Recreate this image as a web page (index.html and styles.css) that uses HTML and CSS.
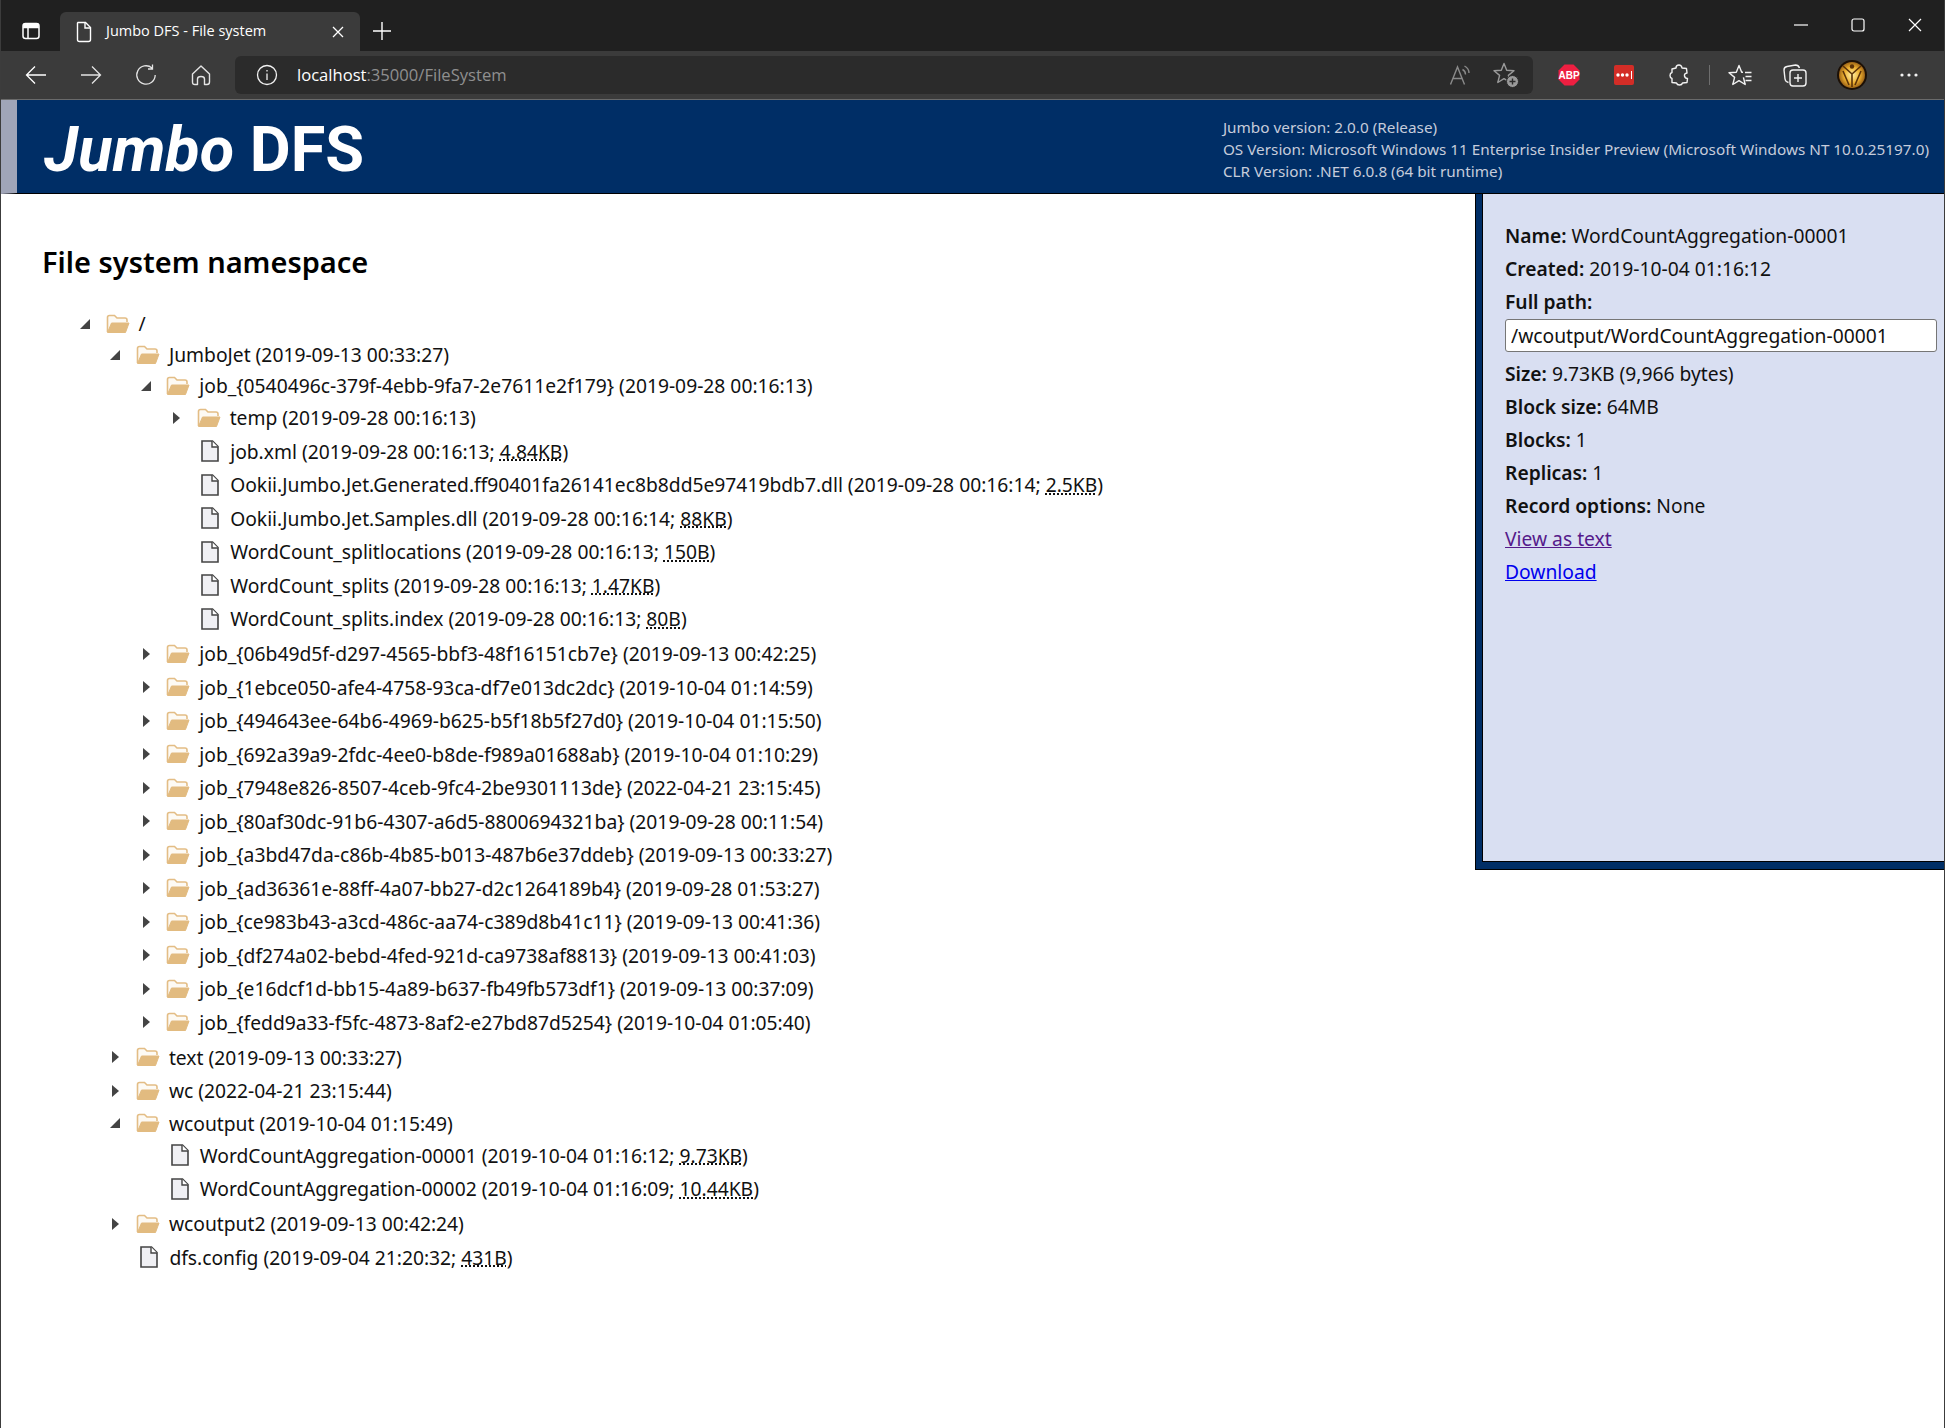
FILE: index.html
```html
<!DOCTYPE html>
<html lang="en">

<head>
  <meta charset="UTF-8">
  <title>Jumbo DFS - File system</title>
  <link rel="stylesheet" href="styles.css">
</head>

<body>

  <!-- Icons used by the tree and the browser frame -->
  <svg class="sprites" width="0" height="0">
    <defs>
      <radialGradient id="gold" cx="50%" cy="50%" r="55%">
        <stop offset="0" stop-color="#fff0a8"/>
        <stop offset="0.55" stop-color="#eeb030"/>
        <stop offset="1" stop-color="#8a5210"/>
      </radialGradient>
    </defs>
    <symbol id="folder" viewBox="0 0 24 20">
      <path d="M1.5 18V3.5Q1.5 1.5 3.5 1.5H8.5L11 4H19Q21 4 21 6V8" fill="#fdfaf4" stroke="#e3bd85" stroke-width="1.6"/>
      <path d="M1.5 18.5L5.5 9H23L19.5 18.5Z" fill="#e2bb80" stroke="#e2bb80" stroke-width="1"/>
    </symbol>
    <symbol id="file" viewBox="0 0 18 22">
      <path d="M1 1H11.5L17 6.5V21H1Z" fill="#f0f0f4" stroke="#444" stroke-width="1.6"/>
      <path d="M11 1V7H17" fill="#fff" stroke="#444" stroke-width="1.4"/>
    </symbol>
  </svg>

  <div class="window">
    <div class="tabstrip">
      <svg class="sidebar-btn" width="20" height="20" viewBox="0 0 20 20" fill="none" stroke="#fff" stroke-width="1.5">
        <rect x="2" y="2.5" width="16" height="15" rx="2.5"/>
        <path d="M2 6.5H18M7 6.5V17.5"/>
        <path d="M3 3.5H17V6H3Z" fill="#fff"/>
      </svg>
      <div class="tab">
        <svg width="18" height="22" viewBox="0 0 18 22" fill="none" stroke="#fff" stroke-width="1.4">
          <path d="M3 1.5H10.5L15.5 6.5V18.5Q15.5 20.5 13.5 20.5H4.5Q2.5 20.5 2.5 18.5V2Z"/>
          <path d="M10 1.5V7H15.5"/>
        </svg>
        <span class="tab-title">Jumbo DFS - File system</span>
        <svg width="14" height="14" viewBox="0 0 14 14" stroke="#fff" stroke-width="1.3"><path d="M2 2L12 12M12 2L2 12"/></svg>
      </div>
      <svg class="new-tab" width="20" height="20" viewBox="0 0 20 20" stroke="#fff" stroke-width="1.4"><path d="M10 1V19M1 10H19"/></svg>
      <div class="window-btns">
        <svg width="14" height="14" viewBox="0 0 14 14" stroke="#fff" stroke-width="1.2"><path d="M0 7H14"/></svg>
        <svg width="14" height="14" viewBox="0 0 14 14" fill="none" stroke="#fff" stroke-width="1.2"><rect x="1" y="1" width="12" height="12" rx="2"/></svg>
        <svg width="14" height="14" viewBox="0 0 14 14" stroke="#fff" stroke-width="1.2"><path d="M1 1L13 13M13 1L1 13"/></svg>
      </div>
    </div>

    <div class="toolbar">
      <span class="tool">
        <svg width="22" height="22" viewBox="0 0 22 22" fill="none" stroke="#fff" stroke-width="1.3"><path d="M21 11H1.500M10 2.500L1.500 11L10 19.500"/></svg>
      </span>
      <span class="tool">
        <svg width="22" height="22" viewBox="0 0 22 22" fill="none" stroke="#e4e4e4" stroke-width="1.3"><path d="M1 11H20.500M12 2.500L20.500 11L12 19.500"/></svg>
      </span>
      <span class="tool">
        <svg width="22" height="22" viewBox="0 0 22 22" fill="none" stroke="#e4e4e4" stroke-width="1.3"><path d="M17 4A9.200 9.200 0 1 0 20.200 11M17.500 0.500V5H13"/></svg>
      </span>
      <span class="tool">
        <svg width="22" height="22" viewBox="0 0 22 22" fill="none" stroke="#e4e4e4" stroke-width="1.4" stroke-linejoin="round"><path d="M2.500 10L11 2L19.500 10V18Q19.500 20.500 17 20.500H14.500V15Q14.500 12.500 11 12.500Q7.500 12.500 7.500 15V20.500H5Q2.500 20.500 2.500 18Z"/></svg>
      </span>

      <div class="address">
        <svg width="22" height="22" viewBox="0 0 22 22" fill="none" stroke="#f2f2f2" stroke-width="1.3">
          <circle cx="11" cy="11" r="9.500"/><path d="M11 9.500V16M11 6V7.500"/>
        </svg>
        <span class="url"><span class="host">localhost</span>:35000/FileSystem</span>
        <svg class="read-aloud" width="24" height="22" viewBox="0 0 24 22" fill="none" stroke="#8a8a8a" stroke-width="1.4">
          <path d="M1.500 20.500L8.500 3L15.500 20.500M4 14.500H13M13.500 5.500Q16.500 7 16.500 10.500M15.500 2Q20 4.500 20 9"/>
        </svg>
        <svg class="add-fav" width="26" height="26" viewBox="0 0 26 26" fill="none" stroke="#9a9a9a" stroke-width="1.4" stroke-linejoin="round">
          <path d="M11 1.500L13.700 8.300L21 8.800L15.400 13.400L17.200 20.500L11 16.600L4.800 20.500L6.600 13.400L1 8.800L8.300 8.300Z"/>
          <circle cx="19.500" cy="19.500" r="6" fill="#9a9a9a" stroke="#2b2b2b" stroke-width="1"/>
          <path d="M19.500 16.500V22.500M16.500 19.500H22.500" stroke="#2b2b2b"/>
        </svg>
      </div>

      <span class="tool">
        <svg width="22" height="22" viewBox="0 0 22 22"><path d="M6.500 0.500H15.500L21.500 6.500V15.500L15.500 21.500H6.500L0.500 15.500V6.500Z" fill="#ee1f41"/></svg>
        <span class="abp">ABP</span>
      </span>
      <span class="tool">
        <svg width="20" height="20" viewBox="0 0 20 20">
          <rect width="20" height="20" rx="2" fill="#d32d27"/>
          <circle cx="4" cy="10" r="1.700" fill="#fff"/><circle cx="8.500" cy="10" r="1.700" fill="#fff"/><circle cx="13" cy="10" r="1.700" fill="#fff"/>
          <path d="M17.500 6V14" stroke="#fff"/>
        </svg>
      </span>
      <span class="tool">
        <svg width="20" height="22" viewBox="0 0 20 22" fill="none" stroke="#f2f2f2" stroke-width="1.4" stroke-linejoin="round">
          <path d="M7 4Q7 1 10 1Q12.500 1 13 4L17.500 4.500L18 9Q15 9.500 15.500 12Q16 14.500 18.500 14.500L18 18.500L13.500 19Q13 21 10.500 21Q8 21 7.500 19L3 18.500V14.500Q1 14 1 11.500Q1 9 3 8.500V5Z"/>
        </svg>
      </span>
      <span class="sep"></span>
      <span class="tool">
        <svg width="24" height="22" viewBox="0 0 24 22" fill="none" stroke="#f2f2f2" stroke-width="1.4" stroke-linejoin="round">
          <path d="M15.400 13.400L17.200 20.500L11 16.600L4.800 20.500L6.600 13.400L1 8.800L8.300 8.300L11 1.500L13.700 8.300H15"/>
          <path d="M17 8.500H23.500M17.500 12.500H23.500M17.500 16.500H23.500"/>
        </svg>
      </span>
      <span class="tool">
        <svg width="24" height="24" viewBox="0 0 24 24" fill="none" stroke="#f2f2f2" stroke-width="1.4">
          <path d="M5.500 19.500Q2.500 19 2 16L1 7Q1 4 4 3.500L12.500 2Q15.500 2 16.500 5"/>
          <rect x="7" y="7" width="16" height="16" rx="3"/>
          <path d="M15 11V19M11 15H19"/>
        </svg>
      </span>
      <svg class="avatar" width="30" height="30" viewBox="0 0 30 30">
        <circle cx="15" cy="15" r="15" fill="#1c1006"/>
        <circle cx="15" cy="15" r="13" fill="url(#gold)"/>
        <path d="M15 14L6 6M15 14L24 6M15 14V27M6 11L12 25M24 11L18 25" fill="none" stroke="#5b3208" stroke-width="1.600"/>
        <circle cx="15" cy="6.500" r="2.200" fill="#5b3208"/>
      </svg>
      <span class="tool">
        <svg width="20" height="6" viewBox="0 0 20 6" fill="#f2f2f2"><circle cx="3" cy="3" r="1.600"/><circle cx="10" cy="3" r="1.600"/><circle cx="17" cy="3" r="1.600"/></svg>
      </span>
    </div>

    <header class="banner">
      <h1 class="logo"><em>Jumbo</em> DFS</h1>
      <div class="version">
        <div>Jumbo version: 2.0.0 (Release)</div>
        <div>OS Version: Microsoft Windows 11 Enterprise Insider Preview (Microsoft Windows NT 10.0.25197.0)</div>
        <div>CLR Version: .NET 6.0.8 (64 bit runtime)</div>
      </div>
    </header>

    <main class="page">
      <section class="content">
        <h2 class="title">File system namespace</h2>

        <ul class="tree">
          <li>
            <div class="row open"><span class="tri down"></span><svg class="ico-folder"><use href="#folder"/></svg>/</div>
            <ul>
              <li>
                <div class="row open"><span class="tri down"></span><svg class="ico-folder"><use href="#folder"/></svg>JumboJet (2019-09-13 00:33:27)</div>
                <ul>
                  <li>
                    <div class="row open"><span class="tri down"></span><svg class="ico-folder"><use href="#folder"/></svg>job_{0540496c-379f-4ebb-9fa7-2e7611e2f179} (2019-09-28 00:16:13)</div>
                    <ul>
                      <li class="row"><span class="tri right"></span><svg class="ico-folder"><use href="#folder"/></svg>temp (2019-09-28 00:16:13)</li>
                      <li class="row"><span class="tri none"></span><svg class="ico-file"><use href="#file"/></svg>job.xml (2019-09-28 00:16:13;&nbsp;<abbr title="4,956 bytes">4.84KB</abbr>)</li>
                      <li class="row"><span class="tri none"></span><svg class="ico-file"><use href="#file"/></svg>Ookii.Jumbo.Jet.Generated.ff90401fa26141ec8b8dd5e97419bdb7.dll (2019-09-28 00:16:14;&nbsp;<abbr title="2,560 bytes">2.5KB</abbr>)</li>
                      <li class="row"><span class="tri none"></span><svg class="ico-file"><use href="#file"/></svg>Ookii.Jumbo.Jet.Samples.dll (2019-09-28 00:16:14;&nbsp;<abbr title="90,112 bytes">88KB</abbr>)</li>
                      <li class="row"><span class="tri none"></span><svg class="ico-file"><use href="#file"/></svg>WordCount_splitlocations (2019-09-28 00:16:13;&nbsp;<abbr title="150 bytes">150B</abbr>)</li>
                      <li class="row"><span class="tri none"></span><svg class="ico-file"><use href="#file"/></svg>WordCount_splits (2019-09-28 00:16:13;&nbsp;<abbr title="1,505 bytes">1.47KB</abbr>)</li>
                      <li class="row"><span class="tri none"></span><svg class="ico-file"><use href="#file"/></svg>WordCount_splits.index (2019-09-28 00:16:13;&nbsp;<abbr title="80 bytes">80B</abbr>)</li>
                    </ul>
                  </li>
                  <li class="row"><span class="tri right"></span><svg class="ico-folder"><use href="#folder"/></svg>job_{06b49d5f-d297-4565-bbf3-48f16151cb7e} (2019-09-13 00:42:25)</li>
                  <li class="row"><span class="tri right"></span><svg class="ico-folder"><use href="#folder"/></svg>job_{1ebce050-afe4-4758-93ca-df7e013dc2dc} (2019-10-04 01:14:59)</li>
                  <li class="row"><span class="tri right"></span><svg class="ico-folder"><use href="#folder"/></svg>job_{494643ee-64b6-4969-b625-b5f18b5f27d0} (2019-10-04 01:15:50)</li>
                  <li class="row"><span class="tri right"></span><svg class="ico-folder"><use href="#folder"/></svg>job_{692a39a9-2fdc-4ee0-b8de-f989a01688ab} (2019-10-04 01:10:29)</li>
                  <li class="row"><span class="tri right"></span><svg class="ico-folder"><use href="#folder"/></svg>job_{7948e826-8507-4ceb-9fc4-2be9301113de} (2022-04-21 23:15:45)</li>
                  <li class="row"><span class="tri right"></span><svg class="ico-folder"><use href="#folder"/></svg>job_{80af30dc-91b6-4307-a6d5-8800694321ba} (2019-09-28 00:11:54)</li>
                  <li class="row"><span class="tri right"></span><svg class="ico-folder"><use href="#folder"/></svg>job_{a3bd47da-c86b-4b85-b013-487b6e37ddeb} (2019-09-13 00:33:27)</li>
                  <li class="row"><span class="tri right"></span><svg class="ico-folder"><use href="#folder"/></svg>job_{ad36361e-88ff-4a07-bb27-d2c1264189b4} (2019-09-28 01:53:27)</li>
                  <li class="row"><span class="tri right"></span><svg class="ico-folder"><use href="#folder"/></svg>job_{ce983b43-a3cd-486c-aa74-c389d8b41c11} (2019-09-13 00:41:36)</li>
                  <li class="row"><span class="tri right"></span><svg class="ico-folder"><use href="#folder"/></svg>job_{df274a02-bebd-4fed-921d-ca9738af8813} (2019-09-13 00:41:03)</li>
                  <li class="row"><span class="tri right"></span><svg class="ico-folder"><use href="#folder"/></svg>job_{e16dcf1d-bb15-4a89-b637-fb49fb573df1} (2019-09-13 00:37:09)</li>
                  <li class="row"><span class="tri right"></span><svg class="ico-folder"><use href="#folder"/></svg>job_{fedd9a33-f5fc-4873-8af2-e27bd87d5254} (2019-10-04 01:05:40)</li>
                </ul>
              </li>
              <li class="row"><span class="tri right"></span><svg class="ico-folder"><use href="#folder"/></svg>text (2019-09-13 00:33:27)</li>
              <li class="row"><span class="tri right"></span><svg class="ico-folder"><use href="#folder"/></svg>wc (2022-04-21 23:15:44)</li>
              <li>
                <div class="row open"><span class="tri down"></span><svg class="ico-folder"><use href="#folder"/></svg>wcoutput (2019-10-04 01:15:49)</div>
                <ul>
                  <li class="row"><span class="tri none"></span><svg class="ico-file"><use href="#file"/></svg>WordCountAggregation-00001 (2019-10-04 01:16:12;&nbsp;<abbr title="9,966 bytes">9.73KB</abbr>)</li>
                  <li class="row"><span class="tri none"></span><svg class="ico-file"><use href="#file"/></svg>WordCountAggregation-00002 (2019-10-04 01:16:09;&nbsp;<abbr title="10,691 bytes">10.44KB</abbr>)</li>
                </ul>
              </li>
              <li class="row"><span class="tri right"></span><svg class="ico-folder"><use href="#folder"/></svg>wcoutput2 (2019-09-13 00:42:24)</li>
              <li class="row"><span class="tri none"></span><svg class="ico-file"><use href="#file"/></svg>dfs.config (2019-09-04 21:20:32;&nbsp;<abbr title="431 bytes">431B</abbr>)</li>
            </ul>
          </li>
        </ul>
      </section>

      <aside class="details">
        <div class="details-inner">
          <p><b>Name:</b> WordCountAggregation-00001</p>
          <p><b>Created:</b> 2019-10-04 01:16:12</p>
          <p><b>Full path:</b></p>
          <input class="full-path" type="text" value="/wcoutput/WordCountAggregation-00001">
          <p><b>Size:</b> 9.73KB (9,966 bytes)</p>
          <p><b>Block size:</b> 64MB</p>
          <p><b>Blocks:</b> 1</p>
          <p><b>Replicas:</b> 1</p>
          <p><b>Record options:</b> None</p>
          <p><a class="visited" href="#">View as text</a></p>
          <p><a class="link" href="#">Download</a></p>
        </div>
      </aside>
    </main>
  </div>

</body>

</html>
```

FILE: styles.css
```css
html,
body {
  margin: 0;
  height: 100%;
  overflow: hidden;
  background: #fff;
}

body {
  font-family: "Noto Sans", "Open Sans", sans-serif;
  font-size: 19.250px;
  color: #111;
}

.sprites {
  position: absolute;
}

.window {
  height: 100vh;
  display: flex;
  flex-direction: column;
  border-left: 1px solid #3c3c3c;
  border-right: 1px solid #3c3c3c;
}

/* Browser frame */
.tabstrip {
  height: 51px;
  flex: none;
  display: flex;
  align-items: flex-end;
  background: #202020;
  color: #fff;
}

.sidebar-btn {
  margin: 0 0 10px 20px;
}

.tab {
  width: 300px;
  height: 39px;
  margin-left: 19px;
  padding: 0 15px;
  box-sizing: border-box;
  display: flex;
  align-items: center;
  background: #3b3b3b;
  border-radius: 6px 6px 0 0;
  font-family: "Open Sans", sans-serif;
  font-size: 14.500px;
}

.tab-title {
  flex: 1;
  margin: 0 0 2px 13px;
}

.new-tab {
  margin: 0 0 10px 12px;
}

.window-btns {
  margin-left: auto;
  align-self: flex-start;
  display: flex;
  gap: 43px;
  padding: 18px 22px 0 0;
}

.toolbar {
  height: 48px;
  flex: none;
  display: flex;
  align-items: center;
  padding-left: 7px;
  background: #3b3b3b;
  border-bottom: 1px solid #6a6a6a;
}

.tool {
  position: relative;
  width: 55px;
  height: 38px;
  flex: none;
  display: flex;
  align-items: center;
  justify-content: center;
}

.abp {
  position: absolute;
  left: 0;
  right: 0;
  text-align: center;
  font-family: "Liberation Sans", sans-serif;
  font-size: 10px;
  font-weight: 700;
  color: #fff;
}

.sep {
  width: 1px;
  height: 20px;
  margin: 0 3px 0 2px;
  flex: none;
  background: #6e6e6e;
}

.avatar {
  margin: 0 14.500px;
  flex: none;
}

.address {
  width: 1298px;
  height: 38px;
  margin: 0 8.500px 0 7px;
  padding-left: 21px;
  box-sizing: border-box;
  flex: none;
  display: flex;
  align-items: center;
  background: #2b2b2b;
  border-radius: 6px;
}

.url {
  flex: 1;
  margin: 0 0 2px 19px;
  font-family: "Open Sans", sans-serif;
  font-size: 16.600px;
  color: #8f8f8f;
}

.host {
  color: #fff;
}

.read-aloud {
  margin-right: 20px;
}

.add-fav {
  margin-right: 14px;
}

/* Page */
.banner {
  height: 93px;
  flex: none;
  display: flex;
  justify-content: space-between;
  align-items: center;
  background: #002e66;
  border-left: 16px solid #a0a5b8;
  border-bottom: 1px solid #000;
}

.logo {
  margin: 6px 0 0 27px;
  font-family: Roboto, sans-serif;
  font-size: 63px;
  font-weight: 700;
  color: #fff;
}

.version {
  padding: 5px 15px 0 0;
  font-size: 15.300px;
  line-height: 22px;
  color: #c6ccdb;
}

.page {
  flex: 1;
  display: flex;
  align-items: flex-start;
  min-height: 0;
}

.content {
  flex: 1;
  padding-left: 41px;
}

.title {
  margin: 48px 0 26px;
  font-size: 29px;
  line-height: 40px;
  font-weight: 600;
  color: #000;
}

.tree,
.tree ul {
  list-style: none;
  margin: 0;
  padding: 0;
}

.tree {
  padding-left: 37px;
}

.tree ul {
  padding-left: 30.400px;
  margin-bottom: 1.500px;
}

.row {
  height: 33.500px;
  display: flex;
  align-items: center;
  white-space: pre;
}

.row.open {
  height: 31px;
}

.tri {
  width: 22px;
  height: 14px;
  flex: none;
  position: relative;
}

.tri.right::before {
  content: "";
  position: absolute;
  left: 3px;
  top: 1px;
  border-left: 7px solid #444;
  border-top: 6px solid transparent;
  border-bottom: 6px solid transparent;
}

.tri.down::before {
  content: "";
  position: absolute;
  left: 1px;
  top: 2px;
  border-right: 10px solid #444;
  border-top: 10px solid transparent;
}

.ico-folder {
  width: 24px;
  height: 20px;
  margin: 0 9px 0 4.500px;
  flex: none;
}

.ico-file {
  width: 18px;
  height: 22px;
  margin: 0 11px 0 9px;
  flex: none;
}

abbr {
  text-decoration: underline dotted;
}

/* Details panel */
.details {
  width: 469px;
  flex: none;
  box-sizing: border-box;
  background: #002e66;
  border-left: 1px solid #000;
  border-bottom: 1px solid #000;
  padding: 0 0 7px 6px;
}

.details-inner {
  height: 668px;
  padding: 25px 7px 0 22px;
  box-sizing: border-box;
  background: #d9dff2;
  border-left: 1px solid #000;
  border-bottom: 1px solid #000;
}

.details-inner p {
  margin: 0;
  height: 33px;
  line-height: 33px;
  white-space: nowrap;
}

.details-inner b {
  font-weight: 600;
}

.full-path {
  display: block;
  width: 100%;
  height: 33px;
  margin: 1px 0 5px;
  padding: 0 5px;
  box-sizing: border-box;
  font: 19.250px "Noto Sans", sans-serif;
  color: #111;
  background: #fff;
  border: 1px solid #767676;
  border-radius: 3px;
}

.visited {
  color: #551a8b;
}

.link {
  color: #0000ee;
}
```
